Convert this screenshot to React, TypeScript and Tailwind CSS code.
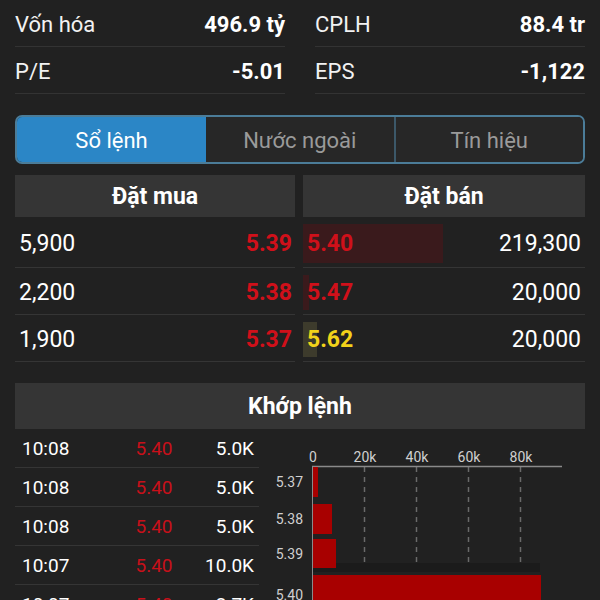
import React from "react";

type Stat = { label: string; value: string };

const stats: Stat[][] = [
	[
		{ label: "Vốn hóa", value: "496.9 tỷ" },
		{ label: "CPLH", value: "88.4 tr" },
	],
	[
		{ label: "P/E", value: "-5.01" },
		{ label: "EPS", value: "-1,122" },
	],
];

const buys = [
	{ vol: "5,900", price: "5.39", h: "h-[51px]" },
	{ vol: "2,200", price: "5.38", h: "h-[47px]" },
	{ vol: "1,900", price: "5.37", h: "h-[47px]" },
];

const sells = [
	{ price: "5.40", vol: "219,300", color: "text-[#d0101a]", bar: "w-[140px] bg-[#3a1a1c]", h: "h-[51px]" },
	{ price: "5.47", vol: "20,000", color: "text-[#d0101a]", bar: "w-[6px] bg-[#3a1a1c]", h: "h-[47px]" },
	{ price: "5.62", vol: "20,000", color: "text-[#f2d21a]", bar: "w-[14px] bg-[#3d3b2c]", h: "h-[47px]" },
];

const trades = [
	{ time: "10:08", price: "5.40", vol: "5.0K" },
	{ time: "10:08", price: "5.40", vol: "5.0K" },
	{ time: "10:08", price: "5.40", vol: "5.0K" },
	{ time: "10:07", price: "5.40", vol: "10.0K" },
	{ time: "10:07", price: "5.40", vol: "2.7K" },
];

const ticks = ["0", "20k", "40k", "60k", "80k"];
const volBars = [
	{ label: "5.37", y: 38, h: 30, w: 5 },
	{ label: "5.38", y: 75, h: 30, w: 19 },
	{ label: "5.39", y: 110, h: 29, w: 23 },
	{ label: "5.40", y: 146, h: 40, w: 228 },
];

const VolumeChart = () => (
	<svg width="323" height="175" className="ml-[3px] block">
		{ticks.map((t, i) => (
			<text
				key={t}
				x={51 + i * 52}
				y={33}
				textAnchor="middle"
				fontSize="14"
				fill="#d0d0d0"
				fontFamily="Roboto, sans-serif"
			>
				{t}
			</text>
		))}
		{ticks.slice(1).map((t, i) => (
			<line
				key={t}
				x1={102.5 + i * 52}
				x2={102.5 + i * 52}
				y1={38}
				y2={175}
				stroke="#6a6a6a"
				strokeWidth="1.5"
				strokeDasharray="5 5"
			/>
		))}
		<rect x={50} y={134} width={228} height={9} fill="#1b1b1b" />
		<line x1={50} x2={300} y1={37.5} y2={37.5} stroke="#8a8a8a" strokeWidth="1.5" />
		<line x1={50.5} x2={50.5} y1={37} y2={175} stroke="#8a8a8a" strokeWidth="1" />
		{volBars.map((b) => (
			<g key={b.label}>
				<rect x={51} y={b.y} width={b.w} height={b.h} fill="#a80000" />
				<text
					x={41}
					y={b.y + b.h / 2 + 5}
					textAnchor="end"
					fontSize="14"
					fill="#d0d0d0"
					fontFamily="Roboto, sans-serif"
				>
					{b.label}
				</text>
			</g>
		))}
	</svg>
);

export default function App() {
	return (
		<div className="w-[600px] h-[600px] overflow-hidden bg-[#212121] text-white font-['Roboto',sans-serif]">
			{/* stats */}
			<div className="px-[15px]">
				{stats.map((row, r) => (
					<div key={r} className="grid grid-cols-2 gap-x-[30px]">
						{row.map((s) => (
							<div
								key={s.label}
								className="flex h-[47px] items-center justify-between border-b border-[#333] pt-[3px]"
							>
								<span className="text-[22px] text-[#f2f2f2]">{s.label}</span>
								<span className="text-[22px] font-bold">{s.value}</span>
							</div>
						))}
					</div>
				))}
			</div>

			{/* tabs */}
			<div className="mx-[15px] mt-[21px] flex h-[49px] overflow-hidden rounded-[7px] border-2 border-[#4b7c98]">
				<div className="flex w-[189px] items-center justify-center bg-[#2b86c6] pt-[2px] text-[22px] text-white">
					Sổ lệnh
				</div>
				<div className="flex flex-1 items-center justify-center bg-[#272727] pt-[2px] text-[22px] text-[#9a9a9a]">
					Nước ngoài
				</div>
				<div className="flex flex-1 items-center justify-center border-l-2 border-[#3c5869] bg-[#272727] pt-[2px] text-[22px] text-[#9a9a9a]">
					Tín hiệu
				</div>
			</div>

			{/* order book */}
			<div className="mt-[11px] mx-[15px] grid grid-cols-[280px_1fr] gap-x-[8px]">
				<div>
					<div className="flex h-[42px] items-center justify-center bg-[#353535] pt-[3px] text-[23px] font-bold">
						Đặt mua
					</div>
					{buys.map((b) => (
						<div
							key={b.price}
							className={`flex items-center justify-between border-b border-[#353535] pl-[4px] pr-[3px] pt-[4px] ${b.h}`}
						>
							<span className="text-[23px]">{b.vol}</span>
							<span className="text-[23px] font-bold text-[#d0101a]">{b.price}</span>
						</div>
					))}
				</div>
				<div>
					<div className="flex h-[42px] items-center justify-center bg-[#353535] pt-[3px] text-[23px] font-bold">
						Đặt bán
					</div>
					{sells.map((s) => (
						<div key={s.price} className={`relative flex items-center justify-between border-b border-[#353535] pr-[4px] pt-[4px] ${s.h}`}>
							<div className={`absolute left-0 top-[7px] bottom-[4px] ${s.bar}`} />
							<span className={`relative pl-[4px] text-[23px] font-bold ${s.color}`}>{s.price}</span>
							<span className="text-[23px]">{s.vol}</span>
						</div>
					))}
				</div>
			</div>

			{/* matched orders */}
			<div className="mx-[15px] mt-[21px] flex h-[46px] items-center justify-center bg-[#353535] pt-[2px] text-[23px] font-bold">
				Khớp lệnh
			</div>
			<div className="mx-[15px] flex">
				<div className="w-[244px]">
					{trades.map((t, i) => (
						<div
							key={i}
							className="grid h-[39px] grid-cols-[100px_64px_1fr] items-center border-b border-[#353535] pl-[7px] pr-[5px] pt-[2px] text-[19px]"
						>
							<span>{t.time}</span>
							<span className="text-center text-[#c8101a]">{t.price}</span>
							<span className="text-right">{t.vol}</span>
						</div>
					))}
				</div>
				<VolumeChart />
			</div>
		</div>
	);
}
